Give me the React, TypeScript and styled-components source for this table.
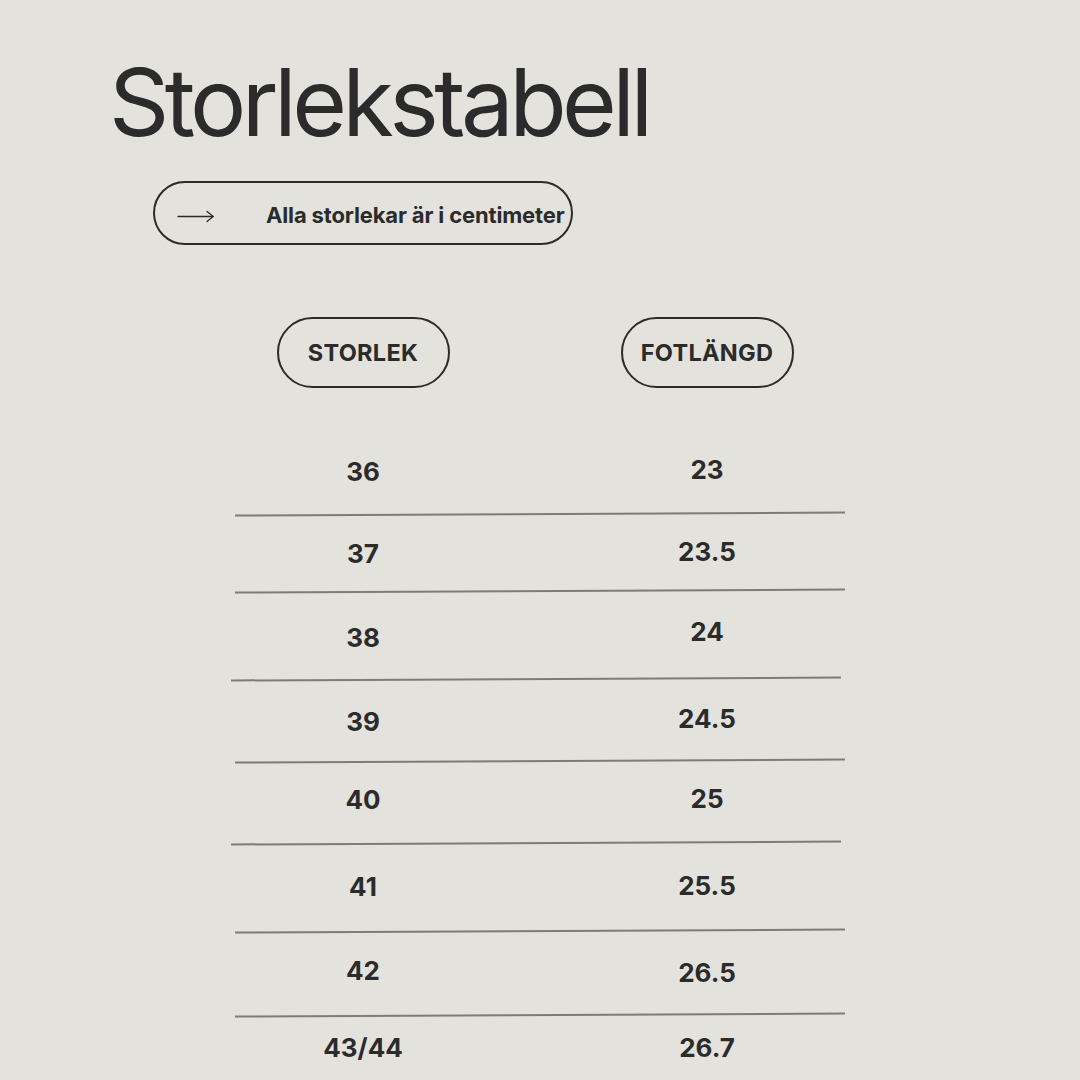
import React from "react";
import styled, { createGlobalStyle } from "styled-components";

const GlobalStyle = createGlobalStyle`
  html, body {
    margin: 0;
    padding: 0;
    background: #e3e2dd;
  }
  body {
    font-family: Inter, "Noto Sans", sans-serif;
    color: #2b2b2b;
  }
`;

const Page = styled.main`
  width: 1080px;
  height: 1080px;
  overflow: hidden;
  box-sizing: border-box;
  padding-top: 55px;
  background: #e3e2dd;
`;

const Title = styled.h1`
  margin: 0 0 0 109px;
  font-size: 94px;
  line-height: 94px;
  font-weight: 400;
  letter-spacing: -4.6px;
  color: #2b2b2b;
`;

const NotePill = styled.div`
  margin: 32px 0 0 153px;
  width: 420px;
  height: 64px;
  box-sizing: border-box;
  border: 2px solid #2b2b2b;
  border-radius: 32px;
  display: flex;
  align-items: center;
  padding-left: 22px;
`;

const ArrowIcon = styled.svg`
  width: 38px;
  height: 14px;
  margin-top: 6px;
  flex: none;
`;

const NoteText = styled.span`
  margin-left: 51px;
  padding-top: 4px;
  font-size: 22px;
  font-weight: 700;
  letter-spacing: -0.15px;
  white-space: nowrap;
`;

const Table = styled.section`
  margin-left: 235px;
  width: 610px;
`;

const TwoCols = styled.div`
  display: grid;
  grid-template-columns: 200px 200px;
  column-gap: 144px;
  padding-left: 28px;
`;

const HeaderRow = styled(TwoCols)`
  margin-top: 72px;
  margin-bottom: 41px;
`;

const HeaderPill = styled.div`
  justify-self: center;
  width: 173px;
  height: 71px;
  box-sizing: border-box;
  border: 2px solid #2b2b2b;
  border-radius: 36px;
  display: flex;
  align-items: center;
  justify-content: center;
  font-size: 23.5px;
  font-weight: 700;
  letter-spacing: 0.3px;
`;

const Row = styled.div<{ $h: number }>`
  height: ${(p) => p.$h}px;
  display: flex;
  flex-direction: column;
`;

const RowCells = styled(TwoCols)`
  flex: 1;
  align-items: center;
`;

const Cell = styled.div<{ $dy?: number }>`
  text-align: center;
  font-size: 26px;
  font-weight: 700;
  line-height: 30px;
  transform: translateY(${(p) => p.$dy ?? 0}px);
`;

const Divider = styled.hr<{ $shift: number }>`
  margin: 0 0 0 ${(p) => p.$shift}px;
  width: 610px;
  height: 2px;
  border: none;
  background: #7c7c78;
  transform: rotate(-0.28deg);
  flex: none;
`;

type SizeRow = {
  size: string;
  length: string;
  h: number;
  shift: number | null;
  dyL: number;
  dyR: number;
};

const rows: SizeRow[] = [
  { size: "36", length: "23", h: 86, shift: 0, dyL: 1, dyR: -1 },
  { size: "37", length: "23.5", h: 77, shift: 0, dyL: 1, dyR: -1 },
  { size: "38", length: "24", h: 88, shift: -4, dyL: 3, dyR: -3 },
  { size: "39", length: "24.5", h: 82, shift: 0, dyL: 2, dyR: -1 },
  { size: "40", length: "25", h: 82, shift: -4, dyL: -2, dyR: -3 },
  { size: "41", length: "25.5", h: 88, shift: 0, dyL: 0, dyR: -1 },
  { size: "42", length: "26.5", h: 84, shift: 0, dyL: -2, dyR: 0 },
  { size: "43/44", length: "26.7", h: 64, shift: null, dyL: 0, dyR: 0 },
];

export default function App() {
  return (
    <>
      <GlobalStyle />
      <Page>
        <Title>Storlekstabell</Title>
        <NotePill>
          <ArrowIcon viewBox="0 0 38 14" fill="none" stroke="#2b2b2b" strokeWidth="1.3" strokeLinecap="round">
            <path d="M1 7.5 H36" />
            <path d="M30 2.5 L36.2 7.5 L30 12.5" />
          </ArrowIcon>
          <NoteText>Alla storlekar är i centimeter</NoteText>
        </NotePill>
        <Table>
          <HeaderRow>
            <HeaderPill>STORLEK</HeaderPill>
            <HeaderPill>FOTLÄNGD</HeaderPill>
          </HeaderRow>
          {rows.map((r) => (
            <Row key={r.size} $h={r.h}>
              <RowCells>
                <Cell $dy={r.dyL}>{r.size}</Cell>
                <Cell $dy={r.dyR}>{r.length}</Cell>
              </RowCells>
              {r.shift !== null && <Divider $shift={r.shift} />}
            </Row>
          ))}
        </Table>
      </Page>
    </>
  );
}
